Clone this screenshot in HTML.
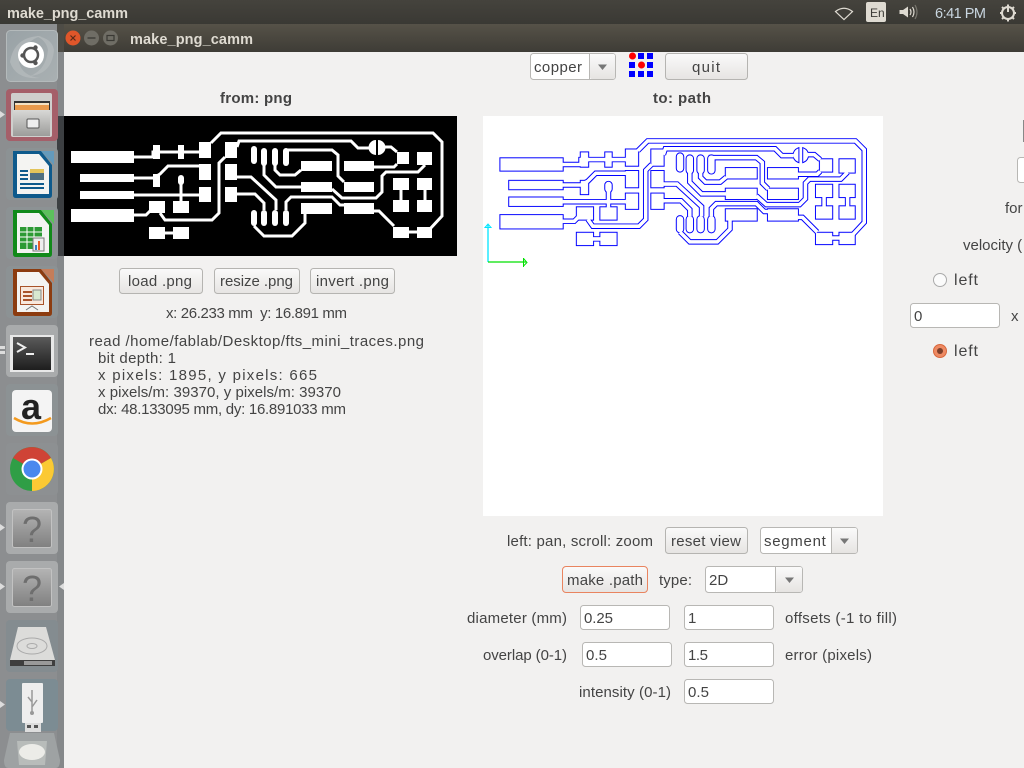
<!DOCTYPE html>
<html><head><meta charset="utf-8"><style>
html,body{margin:0;padding:0;background:#f2f1f0;overflow:hidden}
svg{display:block}
text{font-family:"Liberation Sans",sans-serif;font-size:15px;fill:#444;white-space:pre}
.b{font-weight:bold;font-size:15px}
.t{fill:#dfdbd2;font-weight:bold;font-size:14.5px}
.w{fill:#fff;stroke:#b8b7b4;stroke-width:1}
.btn{fill:url(#bg);stroke:#b5b4b1;stroke-width:1}
</style></head><body>
<svg width="1024" height="768" viewBox="0 0 1024 768" xmlns="http://www.w3.org/2000/svg">
<defs>
<linearGradient id="bg" x1="0" y1="0" x2="0" y2="1"><stop offset="0" stop-color="#fafafa"/><stop offset="1" stop-color="#e6e4e2"/></linearGradient>
<linearGradient id="tb" x1="0" y1="0" x2="0" y2="1"><stop offset="0" stop-color="#565248"/><stop offset="1" stop-color="#3e3c36"/></linearGradient>
<linearGradient id="top" x1="0" y1="0" x2="0" y2="1"><stop offset="0" stop-color="#45433d"/><stop offset="1" stop-color="#3a3934"/></linearGradient>
<linearGradient id="q" x1="0" y1="0" x2="0" y2="1"><stop offset="0" stop-color="#b4b4b4"/><stop offset="1" stop-color="#808080"/></linearGradient>
<linearGradient id="cab" x1="0" y1="0" x2="0" y2="1"><stop offset="0" stop-color="#d8d8d6"/><stop offset="1" stop-color="#9c9c9a"/></linearGradient>
<linearGradient id="term" x1="0" y1="0" x2="0" y2="1"><stop offset="0" stop-color="#5a5a5a"/><stop offset="1" stop-color="#1e1e1e"/></linearGradient>
<linearGradient id="ub" x1="0" y1="0" x2="1" y2="1"><stop offset="0" stop-color="#99a2a6"/><stop offset="1" stop-color="#a9b0b2"/></linearGradient>
<g id="pads">
<rect x="71" y="151" width="63" height="12"/><rect x="80" y="174" width="54" height="8"/><rect x="80" y="191" width="54" height="8"/><rect x="71" y="209" width="63" height="13"/>
<rect x="153" y="145" width="7" height="14"/><rect x="178" y="145" width="6" height="14"/><rect x="199" y="142" width="12" height="16"/><rect x="225" y="142" width="12" height="16"/>
<rect x="199" y="164" width="12" height="16"/><rect x="225" y="164" width="12" height="16"/><rect x="199" y="187" width="12" height="15"/><rect x="225" y="187" width="12" height="15"/>
<rect x="153" y="174" width="7" height="13"/><rect x="149" y="201" width="16" height="12"/><rect x="173" y="201" width="16" height="12"/><rect x="149" y="227" width="16" height="12"/><rect x="173" y="227" width="16" height="12"/>
<rect x="301" y="161" width="31" height="10"/><rect x="301" y="182" width="31" height="10"/><rect x="344" y="161" width="30" height="10"/><rect x="344" y="182" width="30" height="10"/><rect x="301" y="203" width="31" height="11"/><rect x="344" y="203" width="30" height="11"/>
<rect x="397" y="152" width="12" height="12"/><rect x="417" y="152" width="15" height="13"/><rect x="393" y="178" width="16" height="12"/><rect x="417" y="178" width="15" height="12"/><rect x="393" y="200" width="16" height="12"/><rect x="417" y="200" width="15" height="12"/><rect x="393" y="227" width="16" height="11"/><rect x="417" y="227" width="15" height="11"/>
<rect x="251" y="146" width="6" height="18" rx="3"/><rect x="261" y="148" width="6" height="18" rx="3"/><rect x="272" y="148" width="6" height="18" rx="3"/><rect x="283" y="148" width="6" height="18" rx="3"/>
<rect x="251" y="210" width="6" height="16" rx="3"/><rect x="261" y="210" width="6" height="16" rx="3"/><rect x="272" y="210" width="6" height="16" rx="3"/><rect x="283" y="210" width="6" height="16" rx="3"/>
<rect x="178" y="175" width="6" height="10" rx="3"/>
</g>
<g id="traces" fill="none" stroke-linejoin="miter">
<path d="M134,157H153V152H199"/>
<path d="M134,178H153L160,174L168,166H199"/>
<path d="M134,195H199"/>
<path d="M181,178V201"/>
<path d="M134,215H146L151,210"/>
<path d="M160,213L165,220H212L219,213V163L225,157"/>
<path d="M211,143L221,133H433L442,142V216L429,230"/>
<path d="M237,147L239,141H351L358,148H370"/>
<path d="M384,147H391L397,152"/>
<path d="M397,164L394,167H374"/>
<path d="M264,165V175L276,187H301"/>
<path d="M275,165V170L280,175H295L301,170"/>
<path d="M286,160V150H332L338,155V176L344,182"/>
<path d="M254,226L264,236H292L305,223V214"/>
<path d="M237,177H251L276,200V210"/>
<path d="M237,194H255L264,203V210"/>
<path d="M286,210V202L291,197H332L340,205H344"/>
<path d="M425,165L418,172H386L382,176V192L376,198H342L332,189"/>
<path d="M401,190V200M425,190V200M409,232H417M165,233H173"/>
<path d="M374,211H379L394,226"/>
</g>
<g id="semi"><path d="M374.500,141A7,7 0 0 0 374.500,154Z"/><path d="M380,141A7,7 0 0 1 380,154Z"/></g>
</defs>

<rect width="1024" height="768" fill="#f2f1f0"/>

<!-- left pcb -->
<rect x="64" y="116" width="393" height="140" fill="#000"/>
<use href="#pads" fill="#fff"/>
<use href="#traces" stroke="#fff" stroke-width="3"/>
<path d="M376,140A7.500,7.500 0 0 0 376,155Z M378,140A7.500,7.500 0 0 1 378,155Z" fill="#fff"/>

<text class="b" x="220" y="103" textLength="72">from: png</text>
<text class="b" x="653" y="103" textLength="58">to: path</text>

<!-- buttons left -->
<rect class="btn" x="119.500" y="268.500" width="83" height="25" rx="3"/>
<rect class="btn" x="214.500" y="268.500" width="85" height="25" rx="3"/>
<rect class="btn" x="310.500" y="268.500" width="84" height="25" rx="3"/>
<text x="128" y="286" textLength="64">load .png</text>
<text x="220" y="286" textLength="73">resize .png</text>
<text x="316" y="286" textLength="73">invert .png</text>
<text x="166" y="318" textLength="181">x: 26.233 mm  y: 16.891 mm</text>
<text x="89" y="346" textLength="335">read /home/fablab/Desktop/fts_mini_traces.png</text>
<text x="98" y="363" textLength="78">bit depth: 1</text>
<text x="98" y="380" textLength="219">x pixels: 1895, y pixels: 665</text>
<text x="98" y="397" textLength="243">x pixels/m: 39370, y pixels/m: 39370</text>
<text x="98" y="414" textLength="248">dx: 48.133095 mm, dy: 16.891033 mm</text>

<!-- path view -->
<rect x="483" y="116" width="400" height="400" fill="#fff"/>
<g transform="translate(431.1,10.6) scale(.98)">
<g stroke="#0000ff" fill="#0000ff"><use href="#pads" stroke-width="2.6"/><use href="#semi" stroke-width="2.6"/><use href="#traces" stroke-width="5.6"/></g>
<g stroke="#fff" fill="#fff"><use href="#pads" stroke-width=".6"/><use href="#semi" stroke-width=".6"/><use href="#traces" stroke-width="3.6"/></g>
</g>
<path d="M488,262V225" stroke="#00e5ff" stroke-width="1.300" fill="none"/>
<path d="M485,227.500H491L488,224Z" stroke="#00e5ff" fill="none"/>
<path d="M488,262H526" stroke="#00e000" stroke-width="1.300" fill="none"/>
<path d="M523.500,258V267M523.500,258.500L527,262.500L523.500,266" stroke="#00e000" fill="none"/>

<!-- top controls -->
<rect class="w" x="530.500" y="53.500" width="85" height="26" rx="3"/>
<rect x="590" y="54" width="25" height="25" rx="2" fill="url(#bg)"/>
<path d="M589.500,54V79" stroke="#b8b7b4"/>
<path d="M598,64.500H607L602.500,70Z" fill="#777"/>
<text x="534" y="72" textLength="48">copper</text>
<g fill="#0000ff"><rect x="638" y="53" width="6" height="6"/><rect x="647" y="53" width="6" height="6"/><rect x="629" y="62" width="6" height="6"/><rect x="647" y="62" width="6" height="6"/><rect x="629" y="71" width="6" height="6"/><rect x="638" y="71" width="6" height="6"/><rect x="647" y="71" width="6" height="6"/></g>
<circle cx="632.500" cy="56" r="3.500" fill="#f00"/><circle cx="641.500" cy="65" r="3.500" fill="#f00"/>
<rect class="btn" x="665.500" y="53.500" width="82" height="26" rx="3"/>
<text x="692" y="72" textLength="28">quit</text>

<!-- bottom controls -->
<text x="507" y="546" textLength="146">left: pan, scroll: zoom</text>
<rect class="btn" x="665.500" y="527.500" width="82" height="26" rx="3"/>
<text x="671" y="546" textLength="70">reset view</text>
<rect class="w" x="760.500" y="527.500" width="97" height="26" rx="3"/>
<rect x="831" y="528" width="26" height="25" rx="2" fill="url(#bg)"/>
<path d="M831.500,528V553" stroke="#b8b7b4"/>
<path d="M840,538.500H849L844.500,544Z" fill="#777"/>
<svg x="760" y="528" width="67" height="25"><text x="4" y="18" textLength="70">segments</text></svg>

<rect x="562.500" y="566.500" width="85" height="26" rx="3.500" fill="url(#bg)" stroke="#e9845f" stroke-width="1"/>
<text x="567" y="585" textLength="76">make .path</text>
<text x="659" y="585" textLength="33">type:</text>
<rect class="w" x="705.500" y="566.500" width="97" height="26" rx="3"/>
<rect x="776" y="567" width="26" height="25" rx="2" fill="url(#bg)"/>
<path d="M775.500,567V592" stroke="#b8b7b4"/>
<path d="M785,577.500H794L789.500,583Z" fill="#777"/>
<text x="709" y="585">2D</text>

<text x="467" y="623" textLength="100">diameter (mm)</text>
<rect class="w" x="580.500" y="605.500" width="89" height="24" rx="3"/><text x="584" y="623" textLength="29">0.25</text>
<rect class="w" x="684.500" y="605.500" width="89" height="24" rx="3"/><text x="688" y="623">1</text>
<text x="785" y="623" textLength="112">offsets (-1 to fill)</text>
<text x="483" y="660" textLength="84">overlap (0-1)</text>
<rect class="w" x="582.500" y="642.500" width="89" height="24" rx="3"/><text x="586" y="660" textLength="21">0.5</text>
<rect class="w" x="684.500" y="642.500" width="89" height="24" rx="3"/><text x="688" y="660" textLength="20">1.5</text>
<text x="785" y="660" textLength="87">error (pixels)</text>
<text x="579" y="697" textLength="92">intensity (0-1)</text>
<rect class="w" x="684.500" y="679.500" width="89" height="24" rx="3"/><text x="688" y="697" textLength="21">0.5</text>

<!-- right clipped -->
<rect x="1023" y="120" width="3" height="22" fill="#888"/>
<rect class="w" x="1017.500" y="157.500" width="20" height="25" rx="3"/>
<text x="1005" y="213">for</text>
<text x="963" y="250">velocity (</text>
<circle cx="940" cy="280" r="6.500" fill="#fbfbfb" stroke="#aaa"/>
<text x="954" y="285" style="font-size:16px" textLength="24">left</text>
<rect class="w" x="910.500" y="303.500" width="89" height="24" rx="3"/><text x="914" y="321">0</text>
<text x="1011" y="321">x</text>
<circle cx="940" cy="351" r="6.500" fill="#ee8a63" stroke="#d8673c"/><circle cx="940" cy="351" r="3" fill="#7d3f2a"/>
<text x="954" y="356" style="font-size:16px" textLength="24">left</text>

<!-- title bars -->
<rect x="0" y="24" width="1024" height="28" fill="url(#tb)"/>
<rect x="0" y="0" width="1024" height="24" fill="url(#top)"/>
<text class="t" x="7" y="18" textLength="121">make_png_camm</text>
<text class="t" x="130" y="44" textLength="123">make_png_camm</text>
<circle cx="73" cy="38" r="7.500" fill="#e0562a"/><path d="M70.500,35.500L75.500,40.500M75.500,35.500L70.500,40.500" stroke="#5a2a18" stroke-width="1.200"/>
<circle cx="91.500" cy="38" r="7.500" fill="#6f6d65"/><path d="M87.500,38H95.500" stroke="#3a3934" stroke-width="1.300"/>
<circle cx="110.500" cy="38" r="7.500" fill="#6f6d65"/><rect x="107" y="35.500" width="7" height="5" fill="none" stroke="#3a3934" stroke-width="1.200"/>

<!-- indicators -->
<path d="M835.500,11.500Q844,5 852.500,11.500L844,19.500Z" fill="none" stroke="#dfdbd2" stroke-width="1.200"/>
<rect x="866" y="2" width="20" height="20" rx="2" fill="#dfdbd2"/>
<text x="870" y="17" style="font-size:12px;fill:#3c3b37">En</text>
<path d="M899.500,10H903L908,6.500V17.500L903,14H899.500Z" fill="#dfdbd2"/>
<path d="M910,9Q912,12 910,15M912.500,7Q915.500,12 912.500,17" fill="none" stroke="#dfdbd2" stroke-width="1.200"/><path d="M915,5Q919,12 915,19" fill="none" stroke="#77756d" stroke-width="1.200"/>
<text x="935" y="18" textLength="51" style="font-size:14.500px;fill:#c9d6e0">6:41 PM</text>
<circle cx="1008" cy="13" r="6" fill="none" stroke="#dfdbd2" stroke-width="2"/><path d="M1008,5V12" stroke="#dfdbd2" stroke-width="2"/><path d="M1008,4.500V7M1000,13H1002.500M1013.500,13H1016M1008,19V21.500M1002,7L1003.500,8.500M1012.500,17.500L1014,19M1002,19L1003.500,17.500M1012.500,8.500L1014,7" stroke="#dfdbd2" stroke-width="2"/>

<!-- dock -->
<rect x="0" y="24" width="64" height="744" fill="#8c8e90"/>
<rect x="57" y="24" width="7" height="744" fill="#85888a"/>
<rect x="57" y="24" width="7" height="28" fill="#4e4c46"/>
<rect x="57" y="116" width="7" height="140" fill="#3c3f42"/>
<rect x="6.500" y="30.500" width="51" height="51" rx="4" fill="url(#ub)" stroke="#b4babb"/>
<path d="M10,62Q14,36 42,36Q24,40 19,62Q22,76 40,78Q16,80 10,62Z" fill="#b6bcbe" opacity=".7"/>
<path d="M54,50Q52,74 30,76Q46,70 48,50Q46,40 36,36Q52,38 54,50Z" fill="#b6bcbe" opacity=".7"/>
<circle cx="31" cy="55" r="13" fill="#fff"/><circle cx="31" cy="55" r="7" fill="none" stroke="#555" stroke-width="2.500"/><circle cx="22.500" cy="55.500" r="2.200" fill="#555"/><circle cx="35.500" cy="47.500" r="2.200" fill="#555"/><circle cx="35.500" cy="63" r="2.200" fill="#555"/>

<rect x="6" y="89" width="52" height="52" rx="4" fill="#a55f69"/>
<rect x="11" y="93" width="41" height="44" rx="2" fill="#cfcfcd"/>
<rect x="14" y="101" width="36" height="9" fill="#333"/><rect x="15" y="103" width="34" height="7" fill="#e99a4d"/><rect x="15" y="103" width="34" height="2" fill="#f4e2c4"/>
<rect x="13" y="110" width="37" height="26" fill="url(#cab)"/><rect x="27" y="119" width="12" height="9" rx="1" fill="#eee" stroke="#555"/>
<path d="M0,111L5,114.500L0,118Z" fill="#ddd"/>

<rect x="6" y="148" width="52" height="52" rx="4" fill="#8c9294"/>
<path d="M13,151H41L52,165V195Q52,198 49,198H16Q13,198 13,195Z" fill="#0e5a8c"/><path d="M17,154H39L49,166V194H17Z" fill="#f4f4f2"/><path d="M41,151H54V165Z" fill="#5a9cc4" opacity=".8"/>
<g fill="#0e5a8c"><rect x="20" y="170" width="8" height="2"/><rect x="20" y="174" width="8" height="2"/><rect x="20" y="178" width="8" height="2"/><rect x="20" y="183" width="24" height="2"/><rect x="20" y="187" width="24" height="2"/></g><rect x="30" y="169" width="14" height="11" fill="#4f6f80"/><rect x="30" y="169" width="14" height="4" fill="#e3c45a"/>

<rect x="6" y="207" width="52" height="52" rx="4" fill="#8c9294"/>
<path d="M13,210H41L52,224V254Q52,257 49,257H16Q13,257 13,254Z" fill="#118a1a"/><path d="M17,213H39L49,225V253H17Z" fill="#f4f4f2"/><path d="M41,210H54V224Z" fill="#5cc05c"/>
<g fill="#2c9a34"><rect x="20" y="227" width="22" height="22"/></g><path d="M20,232H42M20,237H42M20,242H42M27,227V249M34,227V249" stroke="#fff"/><rect x="33" y="238" width="11" height="13" fill="#eee" stroke="#777"/><rect x="35" y="245" width="2" height="5" fill="#3b7fc4"/><rect x="38" y="241" width="2" height="9" fill="#e85d2a"/>

<rect x="6" y="266" width="52" height="52" rx="4" fill="#8c9294"/>
<path d="M13,269H41L52,283V313Q52,316 49,316H16Q13,316 13,313Z" fill="#8c3c10"/><path d="M17,272H39L49,284V312H17Z" fill="#f4f4f2"/><path d="M41,269H54V283Z" fill="#c47d5a"/>
<rect x="20.500" y="286.500" width="23" height="18" fill="#f8e8dc" stroke="#a8532a"/><g fill="#a8532a"><rect x="23" y="291" width="9" height="2"/><rect x="23" y="295" width="9" height="2"/><rect x="23" y="299" width="9" height="2"/></g><rect x="33" y="290" width="8" height="10" fill="#d8e8d0" stroke="#888"/><path d="M26,310L32,306L38,310" fill="none" stroke="#777"/>

<rect x="6" y="325" width="52" height="52" rx="4" fill="#a9abac"/>
<rect x="10" y="335" width="44" height="37" fill="#e8e8e8"/><rect x="13" y="337" width="38" height="33" fill="url(#term)"/>
<path d="M17,343L25,347.500L17,352" fill="none" stroke="#eee" stroke-width="2"/><rect x="26" y="353" width="8" height="2" fill="#eee"/>
<path d="M0,346H5V349H0ZM0,351H5V354H0Z" fill="#ddd"/>

<rect x="6" y="384" width="52" height="52" rx="4" fill="#8c9294"/>
<rect x="12" y="390" width="40" height="42" rx="4" fill="#f4f4f4"/>
<text x="21" y="419" style="font-size:36px;font-weight:bold;fill:#222">a</text>
<path d="M14,418Q32,429 51,418" fill="none" stroke="#f39a1e" stroke-width="2.500"/>

<rect x="6" y="443" width="52" height="52" rx="4" fill="#8d9092"/>
<circle cx="32" cy="469" r="22" fill="#2f9e46"/>
<path d="M32,469L13,458A22,22 0 0 1 51,458Z" fill="#cf4336"/>
<path d="M32,469L51,458A22,22 0 0 1 32,491Z" fill="#fbc934"/>
<circle cx="32" cy="469" r="10.500" fill="#fff"/><circle cx="32" cy="469" r="8.500" fill="#4a88ee"/>

<rect x="6" y="502" width="52" height="52" rx="4" fill="#a9abac"/><rect x="12.500" y="509.500" width="39" height="38" rx="2" fill="url(#q)" stroke="#c2c2c2"/>
<text x="22" y="542" style="font-size:36px;fill:#6e6e6e">?</text>
<path d="M0,524L5,527.500L0,531Z" fill="#ddd"/>
<rect x="6" y="561" width="52" height="52" rx="4" fill="#a9abac"/><rect x="12.500" y="568.500" width="39" height="38" rx="2" fill="url(#q)" stroke="#c2c2c2"/>
<text x="22" y="601" style="font-size:36px;fill:#6e6e6e">?</text>
<path d="M0,583L5,586.500L0,590Z" fill="#ddd"/><path d="M64,583L59,586.500L64,590Z" fill="#ddd"/>

<rect x="6" y="620" width="52" height="52" rx="4" fill="#848c90"/>
<path d="M18,627H46L55,660H10Z" fill="#dcdcda"/><rect x="10" y="660" width="45" height="6" fill="#3e3e3e"/><rect x="24" y="661" width="28" height="4" fill="#999"/>
<ellipse cx="32" cy="646" rx="15" ry="8" fill="none" stroke="#aaa"/><ellipse cx="32" cy="646" rx="5" ry="2.500" fill="none" stroke="#aaa"/>

<rect x="6" y="679" width="52" height="52" rx="4" fill="#7c8c93"/>
<rect x="22" y="683" width="21" height="40" rx="1" fill="#eee"/><rect x="25" y="723" width="16" height="9" fill="#ddd"/><rect x="27" y="725" width="4" height="3" fill="#555"/><rect x="34" y="725" width="4" height="3" fill="#555"/>
<path d="M32,690V712M32,702L28,697M32,707L37,700" stroke="#999" stroke-width="1.500" fill="none"/><circle cx="32" cy="713" r="2" fill="#999"/>
<path d="M0,701L5,704.500L0,708Z" fill="#ddd"/>

<path d="M10,733H54L60,760Q60,768 56,768H8Q4,768 4,760Z" fill="#9ea2a3"/>
<path d="M17,741H47L45,765H19Z" fill="#b8bcba"/><ellipse cx="32" cy="752" rx="13" ry="8" fill="#ecece8"/>
</svg>
</body></html>
